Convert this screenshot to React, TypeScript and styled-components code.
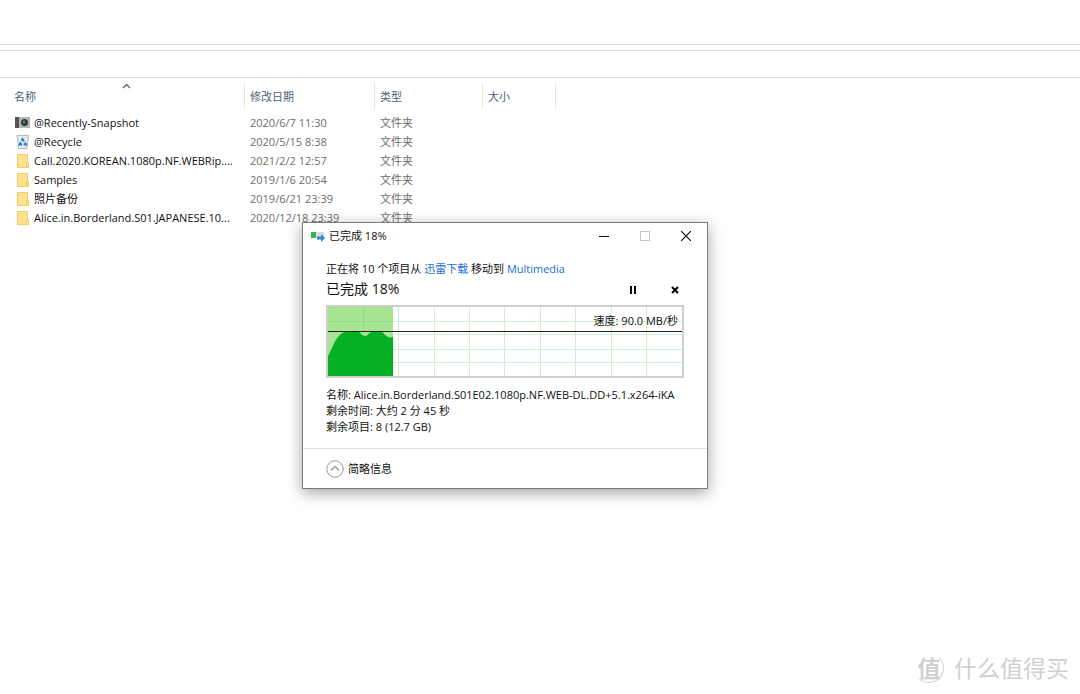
import React from "react";
import styled, { createGlobalStyle } from "styled-components";

const fontStack = `"Open Sans", "Noto Sans CJK SC", sans-serif`;

const GlobalStyle = createGlobalStyle`
  * { box-sizing: border-box; }
  body { margin: 0; background: #fff; color: #111; font: 11px/16px ${fontStack}; }
  button { font: inherit; color: inherit; background: none; border: 0; padding: 0; }
  svg { flex: none; }
`;

const Page = styled.div`
  position: relative;
  min-height: 100vh;
  display: flex;
  flex-direction: column;
`;

const RibbonStrip = styled.div`
  height: 45px;
  border-bottom: 1px solid #dcdcdc;
`;

const AddressStrip = styled.div`
  height: 28px;
  margin-top: 5px;
  border-top: 1px solid #dcdcdc;
  border-bottom: 1px solid #dcdcdc;
`;

const FileTable = styled.table`
  width: 556px;
  margin-top: 5px;
  table-layout: fixed;
  border-collapse: separate;
  border-spacing: 0;
`;

const HeadCell = styled.th<{ $width: number; $inset?: number }>`
  position: relative;
  width: ${(p) => p.$width}px;
  height: 26px;
  padding: 2px 0 0 ${(p) => p.$inset ?? 5}px;
  border-right: 1px solid #e5e5e5;
  color: #4c607a;
  font-weight: 400;
  text-align: left;
`;

const SortMark = styled.svg`
  position: absolute;
  top: 0;
  left: 50%;
`;

const Spacer = styled.tr`
  height: 4px;
`;

const Cell = styled.td`
  height: 19px;
  padding: 0 0 0 5px;
  color: #6d6d6d;
  white-space: nowrap;
`;

const NameCell = styled(Cell)`
  padding: 0 4px 0 15px;
  color: #111;
`;

const FileName = styled.div`
  display: flex;
  align-items: center;
  gap: 4px;
  height: 19px;
`;

const Dialog = styled.section`
  position: absolute;
  top: 222px;
  left: 302px;
  width: 406px;
  background: #fff;
  border: 1px solid #7c7c7c;
  box-shadow: 0 4px 14px rgba(0, 0, 0, 0.36);
`;

const TitleBar = styled.header`
  display: flex;
  align-items: center;
  height: 26px;
  padding: 0 1px 0 8px;
`;

const Title = styled.h1`
  flex: 1;
  margin: 0 0 0 4px;
  font-size: 11px;
  font-weight: 400;
`;

const CaptionButton = styled.button`
  display: flex;
  align-items: center;
  justify-content: center;
  width: 41px;
  height: 26px;
`;

const DialogBody = styled.div`
  padding: 12px 23px 13px;
`;

const Summary = styled.p`
  margin: 0;
`;

const FolderLink = styled.a`
  color: #1a6fd0;
  text-decoration: none;
`;

const ProgressRow = styled.div`
  display: flex;
  align-items: center;
  height: 24px;
`;

const Progress = styled.h2`
  flex: 1;
  margin: 0;
  font-size: 14px;
  font-weight: 400;
`;

const ActionButton = styled.button`
  display: flex;
  align-items: center;
  justify-content: center;
  width: 18px;
  height: 18px;
  margin: 2px 0 0 24px;
`;

const Chart = styled.div`
  position: relative;
  height: 73px;
  margin-top: 4px;
  border: 2px solid #cfcfcf;
`;

const ChartArt = styled.svg`
  display: block;
  width: 100%;
  height: 100%;
`;

const Speed = styled.span`
  position: absolute;
  top: 6px;
  right: 4px;
`;

const Details = styled.div`
  margin-top: 9px;
`;

const Detail = styled.p`
  margin: 0;
  white-space: nowrap;
`;

const DialogFooter = styled.footer`
  height: 40px;
  padding-left: 23px;
  border-top: 1px solid #e0e0e0;
  display: flex;
  align-items: center;
`;

const ToggleButton = styled.button`
  display: flex;
  align-items: center;
  gap: 4px;
`;

const Watermark = styled.div`
  position: absolute;
  right: 11px;
  bottom: 9px;
  display: flex;
  align-items: center;
  gap: 10px;
  color: #d0d0d0;
  font-size: 23px;
  line-height: 34px;
`;

const Seal = styled.span`
  display: flex;
  align-items: center;
  justify-content: center;
  width: 30px;
  height: 30px;
  border: 1px solid transparent;
  border-right-color: #d0d0d0;
  border-bottom-color: #d0d0d0;
  border-radius: 50%;
  font-weight: 700;
`;

const FolderIcon = () => (
  <svg width="15" height="16" viewBox="0 0 15 16" aria-hidden="true">
    <path d="M2.500 1.500h10v8h1v5h-11z" fill="#ffe391" stroke="#efcb62" />
    <path d="M11.500 9v5.500" stroke="#efcb62" />
  </svg>
);

const SnapshotIcon = () => (
  <svg width="15" height="16" viewBox="0 0 15 16" aria-hidden="true">
    <rect x="0" y="2" width="4" height="11" fill="#555" />
    <rect x="4" y="2" width="11" height="11" fill="#b4b4b4" />
    <circle cx="9.500" cy="7.500" r="3.500" fill="#343b3d" />
    <circle cx="9" cy="7" r="1.200" fill="#5a8a86" />
  </svg>
);

const RecycleIcon = () => (
  <svg width="15" height="16" viewBox="0 0 15 16" aria-hidden="true">
    <path d="M2 1.500h11.500l-1.500 13H3.500z" fill="#e6e9eb" stroke="#b3b9bd" />
    <path d="M6.500 6.500 7.500 5 9 7.500M5.800 8 4.500 10.500H7M10 8.500l1 2H8.500" stroke="#1f7fd6" strokeWidth="1.800" fill="none" />
  </svg>
);

const files = [
  { name: "@Recently-Snapshot", date: "2020/6/7 11:30", Icon: SnapshotIcon },
  { name: "@Recycle", date: "2020/5/15 8:38", Icon: RecycleIcon },
  { name: "Call.2020.KOREAN.1080p.NF.WEBRip....", date: "2021/2/2 12:57", Icon: FolderIcon },
  { name: "Samples", date: "2019/1/6 20:54", Icon: FolderIcon },
  { name: "照片备份", date: "2019/6/21 23:39", Icon: FolderIcon },
  { name: "Alice.in.Borderland.S01.JAPANESE.10...", date: "2020/12/18 23:39", Icon: FolderIcon },
];

const columnLines = [35, 70, 106, 141, 176, 212, 247, 283, 318];
const rowLines = [14, 27, 42, 55];

const SpeedChart = () => (
  <Chart>
    <ChartArt viewBox="0 0 354 69" preserveAspectRatio="none" aria-hidden="true">
      <g fill="#cdf0d5">
        {columnLines.map((x) => <rect key={x} x={x} y="0" width="1" height="69" />)}
        {rowLines.map((y) => <rect key={y} x="0" y={y} width="354" height="1" />)}
      </g>
      <rect width="65" height="69" fill="#a8e591" />
      <path d="M35 0h1v69h-1zM0 14h65v1H0z" fill="#92d982" />
      <path d="M0 69V49C4 42 6 34 11 29Q14 25 18 25H31C33 26 34 29 37 29S41 25 44 25H54C57 27 59 32 65 30V69z" fill="#06b025" />
      <rect y="24" width="354" height="1" fill="#222" />
    </ChartArt>
    <Speed>速度: 90.0 MB/秒</Speed>
  </Chart>
);

export default function App() {
  return (
    <Page>
      <GlobalStyle />
      <RibbonStrip />
      <AddressStrip />
      <FileTable>
        <thead>
          <tr>
            <HeadCell $width={245} $inset={14}>
              名称
              <SortMark width="9" height="6" viewBox="0 0 9 6" aria-hidden="true">
                <path d="M1 5l3.500-3.500L8 5" fill="none" stroke="#666" strokeWidth="1.300" />
              </SortMark>
            </HeadCell>
            <HeadCell $width={130}>修改日期</HeadCell>
            <HeadCell $width={108}>类型</HeadCell>
            <HeadCell $width={73}>大小</HeadCell>
          </tr>
        </thead>
        <tbody>
          <Spacer />
          {files.map(({ name, date, Icon }) => (
            <tr key={name}>
              <NameCell><FileName><Icon />{name}</FileName></NameCell>
              <Cell>{date}</Cell>
              <Cell>文件夹</Cell>
              <Cell />
            </tr>
          ))}
        </tbody>
      </FileTable>

      <Dialog role="dialog" aria-labelledby="copy-title">
        <TitleBar>
          <svg width="14" height="12" viewBox="0 0 14 12" aria-hidden="true">
            <rect x="0" y="2" width="5" height="6" fill="#3bb54a" />
            <rect x="5" y="2" width="8" height="6" fill="#dcdcdc" />
            <path d="M6 6.500h4V4l4 4-4 4V9.500H6z" fill="#2f8ad8" />
          </svg>
          <Title id="copy-title">已完成 18%</Title>
          <CaptionButton aria-label="最小化">
            <svg width="10" height="10"><path d="M0 5.500h10" stroke="#111" /></svg>
          </CaptionButton>
          <CaptionButton aria-label="最大化" disabled>
            <svg width="10" height="10"><path d="M.5.500h9v9h-9z" fill="none" stroke="#c4c4c4" /></svg>
          </CaptionButton>
          <CaptionButton aria-label="关闭">
            <svg width="10" height="10"><path d="M0 0l10 10M10 0L0 10" stroke="#111" strokeWidth="1.200" /></svg>
          </CaptionButton>
        </TitleBar>
        <DialogBody>
          <Summary>
            正在将 10 个项目从 <FolderLink href="#source">迅雷下载</FolderLink> 移动到 <FolderLink href="#target">Multimedia</FolderLink>
          </Summary>
          <ProgressRow>
            <Progress>已完成 18%</Progress>
            <ActionButton aria-label="暂停">
              <svg width="8" height="8"><path d="M1 0h2v8H1zM5 0h2v8H5z" fill="#000" /></svg>
            </ActionButton>
            <ActionButton aria-label="取消">
              <svg width="8" height="8"><path d="M1 1l6 6M7 1L1 7" stroke="#000" strokeWidth="2" /></svg>
            </ActionButton>
          </ProgressRow>
          <SpeedChart />
          <Details>
            <Detail>名称: Alice.in.Borderland.S01E02.1080p.NF.WEB-DL.DD+5.1.x264-iKA</Detail>
            <Detail>剩余时间: 大约 2 分 45 秒</Detail>
            <Detail>剩余项目: 8 (12.7 GB)</Detail>
          </Details>
        </DialogBody>
        <DialogFooter>
          <ToggleButton>
            <svg width="18" height="18" viewBox="0 0 18 18" aria-hidden="true">
              <circle cx="9" cy="9" r="8.200" fill="none" stroke="#999" />
              <path d="M5 10.500L9 6.500l4 4" fill="none" stroke="#999" strokeWidth="1.300" />
            </svg>
            简略信息
          </ToggleButton>
        </DialogFooter>
      </Dialog>

      <Watermark><Seal>值</Seal>什么值得买</Watermark>
    </Page>
  );
}
